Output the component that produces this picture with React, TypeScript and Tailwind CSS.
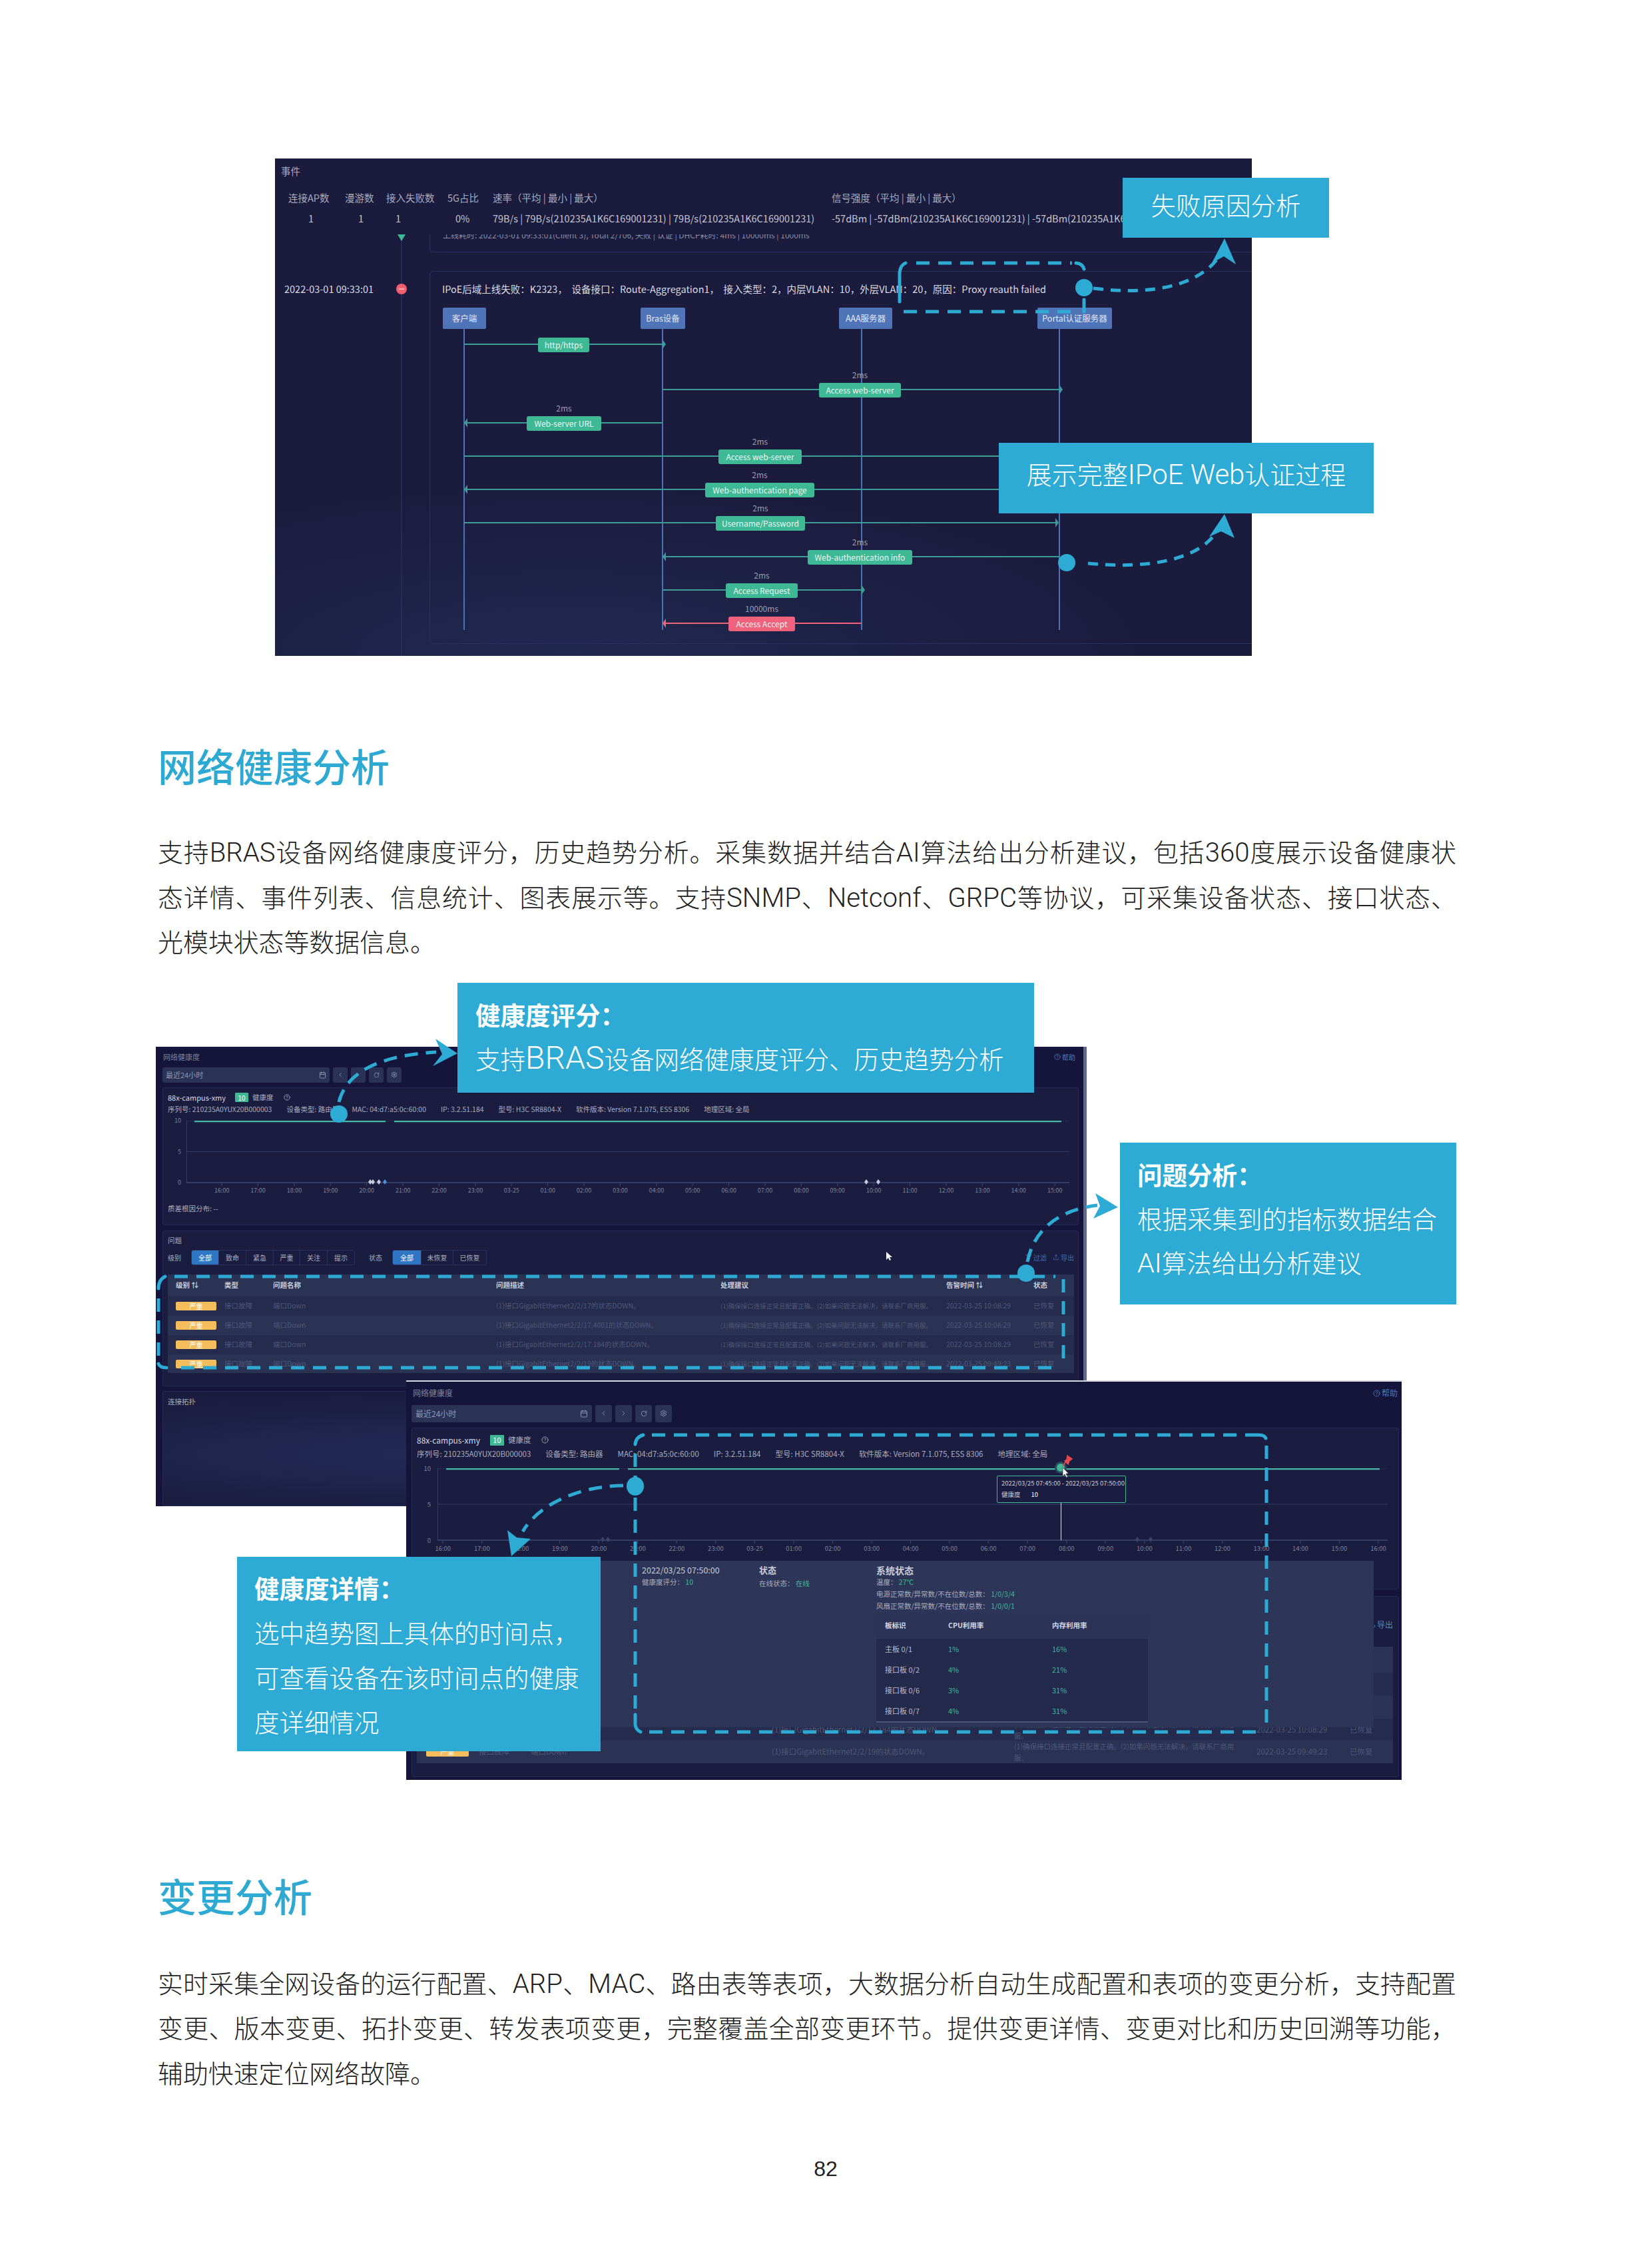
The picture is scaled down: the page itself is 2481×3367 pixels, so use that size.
import React from 'react';
import {
  Calendar,
  ChevronLeft,
  ChevronRight,
  CircleHelp,
  Filter,
  RotateCw,
  Settings,
  Upload,
} from 'lucide-react';

const BLUE = '#2dabd5';

const HOURS = [
  '16:00', '17:00', '18:00', '19:00', '20:00', '21:00', '22:00', '23:00', '03-25',
  '01:00', '02:00', '03:00', '04:00', '05:00', '06:00', '07:00', '08:00', '09:00',
  '10:00', '11:00', '12:00', '13:00', '14:00', '15:00', '16:00',
];

// sequence diagram, page coordinates
const SEQ_NODES = [
  { label: '客户端', x: 665, w: 65 },
  { label: 'Bras设备', x: 962, w: 67 },
  { label: 'AAA服务器', x: 1260, w: 80 },
  { label: 'Portal认证服务器', x: 1558, w: 112 },
];
const LIFELINES = [697, 995, 1294, 1591];
const SEQ_MESSAGES = [
  { label: 'http/https', x: 808, w: 77, y: 517, from: 697, to: 995, head: 'r', lat: '' },
  { label: 'Access web-server', x: 1230, w: 123, y: 585, from: 995, to: 1591, head: 'r', lat: '2ms' },
  { label: 'Web-server URL', x: 791, w: 112, y: 635, from: 697, to: 995, head: 'l', lat: '2ms' },
  { label: 'Access web-server', x: 1079, w: 125, y: 685, from: 697, to: 1591, head: '', lat: '2ms' },
  { label: 'Web-authentication page', x: 1059, w: 164, y: 735, from: 697, to: 1591, head: 'l', lat: '2ms' },
  { label: 'Username/Password', x: 1075, w: 134, y: 785, from: 697, to: 1585, head: 'r', lat: '2ms' },
  { label: 'Web-authentication info', x: 1213, w: 157, y: 836, from: 995, to: 1591, head: 'l', lat: '2ms' },
  { label: 'Access Request', x: 1090, w: 108, y: 886, from: 995, to: 1294, head: 'r', lat: '2ms' },
  { label: 'Access Accept', x: 1094, w: 100, y: 936, from: 995, to: 1294, head: 'l', lat: '10000ms', red: true },
];

const SMALL_ROWS = [
  { desc: '(1)接口GigabitEthernet2/2/17的状态DOWN。', time: '2022-03-25 10:08:29' },
  { desc: '(1)接口GigabitEthernet2/2/17.4001的状态DOWN。', time: '2022-03-25 10:08:29' },
  { desc: '(1)接口GigabitEthernet2/2/17.184的状态DOWN。', time: '2022-03-25 10:08:29' },
  { desc: '(1)接口GigabitEthernet2/2/19的状态DOWN。', time: '2022-03-25 09:49:23' },
];
const ADVICE = '(1)确保接口连接正常且配置正确。(2)如果问题无法解决，请联系厂商用服。';

const BOARDS = [
  { name: '主板 0/1', cpu: '1%', mem: '16%' },
  { name: '接口板 0/2', cpu: '4%', mem: '21%' },
  { name: '接口板 0/6', cpu: '3%', mem: '31%' },
  { name: '接口板 0/7', cpu: '4%', mem: '31%' },
];

// the print font has much wider latin than the CJK family, so those runs get their own face
const Mixed = ({ text, latin }: { text: string; latin: string }) => (
  <>
    {text.split(/([A-Za-z0-9 ]+)/).map((part, i) =>
      i % 2 === 1 ? (
        <span key={i} className={latin}>
          {part}
        </span>
      ) : (
        part
      ),
    )}
  </>
);

const CALLOUT_LATIN = "font-['Roboto'] font-light text-[1.28em]";
const TITLE_LATIN = "font-['Roboto'] font-light text-[1.1em]";
const BODY_LATIN = "font-['Roboto'] font-light text-[1.06em]";

const Callout = ({ className, children }: { className: string; children: React.ReactNode }) => (
  <div className={`absolute z-20 bg-[#2dabd5] text-white font-light ${className}`}>{children}</div>
);

const Paragraph = ({ lines }: { lines: string[] }) => (
  <div className="ml-[237px] w-[1950px] text-[37.9px] leading-[67.5px] font-light text-[#222]">
    {lines.map((line, i) => (
      <div key={i} className={`whitespace-nowrap h-[67.5px] ${i < lines.length - 1 ? '[text-align-last:justify]' : ''}`}>
        <Mixed text={line} latin={BODY_LATIN} />
      </div>
    ))}
  </div>
);

const Dash = ({ d }: { d: string }) => (
  <path d={d} fill="none" stroke={BLUE} strokeWidth="5" strokeDasharray="20 13" />
);
const Solid = ({ d }: { d: string }) => (
  <path d={d} fill="none" stroke={BLUE} strokeWidth="5" strokeLinecap="round" />
);

// 事件 screenshot with the sequence diagram
const EventFigure = () => {
  const ox = 413;
  const oy = 238;
  return (
    <div className="relative ml-[413px] w-[1467px] h-[747px] bg-[#1b1b3d] text-[14.5px] text-[#a8abbd] overflow-hidden">
      <div className="absolute inset-x-0 bottom-0 h-[300px] bg-[radial-gradient(ellipse_at_30%_100%,#212850_0%,#1b1b3d_60%)]" />
      <div className="relative pl-[9px] pt-[8px] leading-[22px]">事件</div>
      <div className="relative flex pl-[20px] mt-[18px] leading-[22px] whitespace-nowrap">
        <span className="w-[85px]">连接AP数</span>
        <span className="w-[62px]">漫游数</span>
        <span className="w-[92px]">接入失败数</span>
        <span className="w-[68px]">5G占比</span>
        <span className="w-[509px]">速率（平均 | 最小 | 最大）</span>
        <span>信号强度（平均 | 最小 | 最大）</span>
      </div>
      <div className="relative flex pl-[20px] mt-[9px] leading-[22px] whitespace-nowrap text-[#c4c6d4]">
        <span className="w-[85px] pl-[30px]">1</span>
        <span className="w-[62px] pl-[20px]">1</span>
        <span className="w-[92px] pl-[14px]">1</span>
        <span className="w-[68px] pl-[12px]">0%</span>
        <span className="w-[509px]">79B/s | 79B/s(210235A1K6C169001231) | 79B/s(210235A1K6C169001231)</span>
        <span>-57dBm | -57dBm(210235A1K6C169001231) | -57dBm(210235A1K6C169001231)</span>
      </div>
      <div className="absolute left-[232px] top-[0px] right-0 h-[141px] rounded-bl-[6px] border-l border-b border-[#2a3060] [clip-path:inset(114px_0_0_0)]">
        <div className="pl-[19px] pt-[106px] text-[12px] text-[#8a8ea6] whitespace-nowrap">
          上线耗时: 2022-03-01 09:33:01(Client 3), Total 2/706, 失败 | 认证 | DHCP耗时: 4ms | 10000ms | 1000ms
        </div>
      </div>
      <div className="absolute left-[232px] top-[169px] right-0 h-[560px] rounded-tl-[6px] rounded-bl-[6px] border-l border-t border-b border-[#2a3060]" />

      <div className="absolute left-[14px] top-[185px] leading-[22px] text-[#d8dae4] whitespace-nowrap">
        2022-03-01 09:33:01
      </div>
      <div className="absolute left-[251px] top-[185px] leading-[22px] text-[#d8dae4] whitespace-pre">
        IPoE后域上线失败：K2323，  设备接口：Route-Aggregation1，  接入类型：2，内层VLAN：10，外层VLAN：20，原因：Proxy reauth failed
      </div>

      {/* timeline and lifelines */}
      <svg className="absolute left-0 top-0" width="1467" height="747" viewBox={`${ox} ${oy} 1467 747`}>
        <line x1="603" y1="360" x2="603" y2="985" stroke="#2a2f5c" strokeWidth="1.5" />
        <path d="M597 352 H609 L603 362 Z" fill="#3fb896" />
        <ellipse cx="603" cy="434" rx="8" ry="8" fill="#f0606f" />
        <line x1="599" y1="434" x2="607" y2="434" stroke="#fff" strokeWidth="1" />
        {LIFELINES.map((x) => (
          <line key={x} x1={x} y1="494" x2={x} y2="946" stroke="#4a72b8" strokeWidth="2" />
        ))}
        {SEQ_MESSAGES.map((m, i) => {
          const color = m.red ? '#f0627c' : '#3c9d96';
          return (
            <g key={i}>
              <line x1={m.from} y1={m.y} x2={m.to} y2={m.y} stroke={color} strokeWidth="2" />
              {m.head === 'r' && <path d={`M${m.to} ${m.y - 7} L${m.to + 5} ${m.y} L${m.to} ${m.y + 7} Z`} fill={color} />}
              {m.head === 'l' && <path d={`M${m.from + 5} ${m.y - 7} L${m.from} ${m.y} L${m.from + 5} ${m.y + 7} Z`} fill={color} />}
            </g>
          );
        })}
      </svg>

      {SEQ_NODES.map((n) => (
        <div
          key={n.label}
          className="absolute h-[32px] rounded-[2px] bg-[#4f74b8] text-[12.5px] text-[#e4e9f4] flex items-center justify-center whitespace-nowrap"
          style={{ left: n.x - ox, top: 462 - oy, width: n.w }}
        >
          {n.label}
        </div>
      ))}
      {SEQ_MESSAGES.map((m, i) => (
        <div
          key={i}
          className="absolute flex flex-col items-center"
          style={{ left: m.x - ox, top: m.y - 35 - oy, width: m.w }}
        >
          <div className="h-[25px] leading-[25px] text-[12px] text-[#9a9db2]">{m.lat}</div>
          <div
            className={`w-full h-[22px] rounded-[3px] text-[12px] text-[#eaf6f2] flex items-center justify-center whitespace-nowrap ${
              m.red ? 'bg-[#f0627c]' : 'bg-[#3fb896]'
            }`}
          >
            {m.label}
          </div>
        </div>
      ))}
    </div>
  );
};

const FigureArrows = () => (
  <svg className="absolute left-0 top-0 z-10 pointer-events-none" width="2481" height="747" viewBox="0 238 2481 747">
    <Solid d="M1351 453 V410 Q1352 398 1360 395" />
    <Dash d="M1376 395 H1610" />
    <Solid d="M1616 395 Q1626 396 1628 404" />
    <Solid d="M1628 450 V468" />
    <Dash d="M1357 468 H1610" />
    <ellipse cx="1628" cy="432" rx="13" ry="13" fill={BLUE} />
    <path d="M1642 433 C1740 445 1806 425 1833 382" fill="none" stroke={BLUE} strokeWidth="5" strokeDasharray="15 11" />
    <path d="M1839 358 L1856 397 L1838 385 L1820 395 Z" fill={BLUE} />
    <ellipse cx="1602" cy="845" rx="13" ry="13" fill={BLUE} />
    <path d="M1634 846 C1720 855 1806 842 1830 793" fill="none" stroke={BLUE} strokeWidth="5" strokeDasharray="15 11" />
    <path d="M1839 772 L1854 808 L1834 798 L1816 806 Z" fill={BLUE} />
  </svg>
);

type ChartProps = {
  width: number;
  height: number;
  step: number;
  firstTick: number;
  ticks: number;
  lineStart: number;
  lineEnd: number;
  gap: number;
  dots: { x: number; color: string }[];
};

const TrendChart = ({ width, height, step, firstTick, ticks, lineStart, lineEnd, gap, dots }: ChartProps) => (
  <svg className="block" width={width} height={height + 6}>
    <line x1="0" y1="0" x2={width} y2="0" stroke="#333c66" strokeWidth="1" />
    <line x1="0" y1={height / 2} x2={width} y2={height / 2} stroke="#333c66" strokeWidth="1" />
    <line x1="0.5" y1="0" x2="0.5" y2={height} stroke="#333c66" strokeWidth="1" />
    <line x1="0" y1={height} x2={width} y2={height} stroke="#3d4873" strokeWidth="1.5" />
    {Array.from({ length: ticks }, (_, i) => (
      <line key={i} x1={firstTick + i * step} y1={height} x2={firstTick + i * step} y2={height + 5} stroke="#3d4873" strokeWidth="1" />
    ))}
    <line x1={lineStart} y1="1" x2={gap} y2="1" stroke="#45b5a5" strokeWidth="2.5" />
    <line x1={gap + 13} y1="1" x2={lineEnd} y2="1" stroke="#45b5a5" strokeWidth="2.5" />
    {dots.map((d) => (
      <path key={d.x} d={`M${d.x} ${height - 5} l3 4 l-3 4 l-3 -4 Z`} fill={d.color} />
    ))}
  </svg>
);

const ToolButton = ({ className, children }: { className: string; children: React.ReactNode }) => (
  <div className={`flex items-center justify-center rounded-[3px] bg-[#2a3355] text-[#8f97b3] ${className}`}>{children}</div>
);

const Segment = ({ items, widths, active }: { items: string[]; widths: string[]; active: number }) => (
  <div className="flex h-[23px] rounded-[3px] border border-[#2b3360] overflow-hidden">
    {items.map((item, i) => (
      <div
        key={item}
        className={`flex items-center justify-center text-[10px] ${widths[i]} ${i > 0 ? 'border-l border-[#2b3360]' : ''} ${
          i === active ? 'bg-[#2f77c4] text-white' : 'text-[#a8abbd]'
        }`}
      >
        {item}
      </div>
    ))}
  </div>
);

const WARN = 'bg-[#f5bd5b] text-white flex items-center justify-center rounded-[2px]';

// 网络健康度 screenshot, back layer
const BackDashboard = () => (
  <div className="absolute z-0 left-[234px] top-[96px] w-[1398px] h-[690px] bg-[#15143a] border-r-[5px] border-[#5c6a88] overflow-hidden flex flex-col pl-[10px] pr-[7px] text-[10.5px] text-[#a8abbd]">
    <div className="h-[31px] flex items-center justify-between pl-[1px] pr-[5px]">
      <span className="text-[#7d8199] text-[11px]">网络健康度</span>
      <span className="flex items-center gap-[2px] text-[#4f78b8] text-[10px]">
        <CircleHelp size={10} />
        帮助
      </span>
    </div>
    <div className="flex h-[23px] gap-[5px] shrink-0">
      <div className="w-[251px] rounded-[3px] bg-[#2a3355] flex items-center justify-between px-[5px] text-[#8f97b3] text-[11px]">
        最近24小时
        <Calendar size={11} />
      </div>
      <ToolButton className="w-[22px]"><ChevronLeft size={10} /></ToolButton>
      <ToolButton className="w-[22px]"><ChevronRight size={10} /></ToolButton>
      <ToolButton className="w-[22px]"><RotateCw size={9} /></ToolButton>
      <ToolButton className="w-[22px]"><Settings size={10} /></ToolButton>
    </div>

    <div className="mt-[7px] h-[207px] shrink-0 rounded-[3px] border border-[#262b55] bg-[#1b1d40] pl-[7px] pt-[7px]">
      <div className="flex items-center h-[15px] whitespace-nowrap">
        <span className="text-[11px] text-[#d5d8e4]">88x-campus-xmy</span>
        <span className="ml-[14px] w-[20px] h-[14px] rounded-[1px] bg-[#3fb896] text-[10px] text-white flex items-center justify-center">10</span>
        <span className="ml-[6px] text-[#a8abbd]">健康度</span>
        <CircleHelp className="ml-[15px]" size={10} />
      </div>
      <div className="flex mt-[3px] h-[14px] gap-[22px] items-center whitespace-nowrap text-[10.5px]">
        <span>序列号: 210235A0YUX20B000003</span>
        <span className="w-[76px]">设备类型: 路由器</span>
        <span>MAC: 04:d7:a5:0c:60:00</span>
        <span>IP: 3.2.51.184</span>
        <span>型号: H3C SR8804-X</span>
        <span>软件版本: Version 7.1.075, ESS 8306</span>
        <span>地理区域: 全局</span>
      </div>
      <div className="flex mt-[10px]">
        <div className="w-[28px] h-[106px] -my-[6.5px] flex flex-col justify-between items-end pr-[8px] text-[9px] leading-[13px] text-[#7d8199]">
          <span>10</span>
          <span>5</span>
          <span>0</span>
        </div>
        <TrendChart
          width={1326}
          height={93}
          step={54.4}
          firstTick={53}
          ticks={24}
          lineStart={12}
          lineEnd={1314}
          gap={299}
          dots={[
            { x: 276, color: '#c8cbd8' },
            { x: 280, color: '#c8cbd8' },
            { x: 289, color: '#c8cbd8' },
            { x: 298, color: '#4a90d8' },
            { x: 1021, color: '#c8cbd8' },
            { x: 1039, color: '#c8cbd8' },
          ]}
        />
      </div>
      <div className="ml-[28px] pl-[26px] grid grid-cols-[repeat(24,54.4px)] text-center text-[9px] text-[#7d8199] leading-[12px]">
        {HOURS.slice(0, 24).map((h, i) => (
          <span key={i}>{h}</span>
        ))}
      </div>
      <div className="mt-[14px] leading-[14px]">质差根因分布: --</div>
    </div>

    <div className="mt-[8px] h-[234px] shrink-0 rounded-[3px] border border-[#262b55] bg-[#1b1d40] pl-[7px] pt-[7px] relative">
      <div className="leading-[14px]">问题</div>
      <div className="flex items-center mt-[7px] h-[23px] whitespace-nowrap">
        <span className="w-[35px] text-[10px]">级别</span>
        <Segment
          items={['全部', '致命', '紧急', '严重', '关注', '提示']}
          widths={['w-[40px]', 'w-[41px]', 'w-[41px]', 'w-[40px]', 'w-[41px]', 'w-[41px]']}
          active={0}
        />
        <span className="ml-[21px] w-[35px] text-[10px]">状态</span>
        <Segment items={['全部', '未恢复', '已恢复']} widths={['w-[42px]', 'w-[48px]', 'w-[50px]']} active={0} />
        <span className="ml-auto mr-[6px] flex items-center gap-[9px] text-[10px] text-[#3a6fb0]">
          <span className="flex items-center gap-[2px]"><Filter size={10} />过滤</span>
          <span className="flex items-center gap-[2px]"><Upload size={10} />导出</span>
        </span>
      </div>
      <div className="mt-[14px] w-[1361px] h-[148px] overflow-hidden">
        <div className="h-[33px] bg-[#2a3354] grid grid-cols-[73px_73px_335px_337px_339px_131px_1fr] pl-[12px] items-center font-bold text-[#c9ccd8]">
          <span>级别 ⇅</span>
          <span>类型</span>
          <span>问题名称</span>
          <span>问题描述</span>
          <span>处理建议</span>
          <span>告警时间 ⇅</span>
          <span>状态</span>
        </div>
        {SMALL_ROWS.map((row, i) => (
          <div
            key={i}
            className={`h-[29px] grid grid-cols-[73px_73px_335px_337px_339px_131px_1fr] pl-[12px] items-center text-[#4f5878] ${
              i % 2 === 0 ? 'bg-[#242b4d]' : 'bg-[#2a3354]'
            }`}
          >
            <span className={`w-[61px] h-[13px] text-[10px] ${WARN}`}>严重</span>
            <span>接口故障</span>
            <span>端口Down</span>
            <span>{row.desc}</span>
            <span className="w-[323px] leading-[14px] text-[9.5px]">{ADVICE}</span>
            <span>{row.time}</span>
            <span>已恢复</span>
          </div>
        ))}
      </div>
      <svg className="absolute left-[1085px] top-[30px]" width="10" height="15" viewBox="0 0 10 15">
        <path d="M1 1 L1 13 L4 10 L6 14 L8 13 L6 9 L10 9 Z" fill="#f4f4f8" />
      </svg>
    </div>

    <div className="mt-[7px] h-[173px] shrink-0 rounded-[3px] border border-[#262b55] bg-[radial-gradient(ellipse_at_35%_55%,#232c58_0%,#1b1d40_65%)] pl-[7px] pt-[8px]">
      <div className="leading-[14px]">连接拓扑</div>
    </div>
  </div>
);

// 网络健康度 screenshot, front layer with the detail popup
const FrontDashboard = () => (
  <div className="absolute z-[1] left-[610px] top-[597px] w-[1495px] h-[600px] bg-[#15143a] border-t-2 border-[#d5d6de] overflow-hidden flex flex-col pl-[8px] pr-[4px] text-[11.5px] text-[#a8abbd]">
    <div className="h-[35px] shrink-0 flex items-center justify-between pl-[2px] pr-[2px]">
      <span className="text-[#7d8199] text-[12px]">网络健康度</span>
      <span className="flex items-center gap-[2px] text-[#4f78b8] text-[12px]">
        <CircleHelp size={11} />
        帮助
      </span>
    </div>
    <div className="flex h-[26px] gap-[5px] shrink-0">
      <div className="w-[271px] rounded-[3px] bg-[#2a3355] flex items-center justify-between px-[6px] text-[#8f97b3] text-[12px]">
        最近24小时
        <Calendar size={12} />
      </div>
      <ToolButton className="w-[25px]"><ChevronLeft size={11} /></ToolButton>
      <ToolButton className="w-[25px]"><ChevronRight size={11} /></ToolButton>
      <ToolButton className="w-[25px]"><RotateCw size={10} /></ToolButton>
      <ToolButton className="w-[25px]"><Settings size={11} /></ToolButton>
    </div>

    <div className="mt-[8px] h-[243px] shrink-0 rounded-[3px] border border-[#262b55] bg-[#1b1d40] pl-[7px] pt-[9px] relative">
      <div className="flex items-center h-[18px] whitespace-nowrap">
        <span className="text-[12px] text-[#d5d8e4]">88x-campus-xmy</span>
        <span className="ml-[15px] w-[21px] h-[16px] rounded-[1px] bg-[#3fb896] text-[11px] text-white flex items-center justify-center">10</span>
        <span className="ml-[6px]">健康度</span>
        <CircleHelp className="ml-[16px]" size={11} />
      </div>
      <div className="flex mt-[3px] h-[18px] gap-[22px] items-center whitespace-nowrap">
        <span>序列号: 210235A0YUX20B000003</span>
        <span>设备类型: 路由器</span>
        <span>MAC: 04:d7:a5:0c:60:00</span>
        <span>IP: 3.2.51.184</span>
        <span>型号: H3C SR8804-X</span>
        <span>软件版本: Version 7.1.075, ESS 8306</span>
        <span>地理区域: 全局</span>
      </div>
      <div className="flex mt-[12px]">
        <div className="w-[31px] h-[122px] -my-[7px] flex flex-col justify-between items-end pr-[10px] text-[9.5px] leading-[14px] text-[#7d8199]">
          <span>10</span>
          <span>5</span>
          <span>0</span>
        </div>
        <TrendChart
          width={1427}
          height={108}
          step={58.54}
          firstTick={8}
          ticks={25}
          lineStart={13}
          lineEnd={1415}
          gap={273}
          dots={[
            { x: 248, color: '#3c4468' },
            { x: 256, color: '#3c4468' },
            { x: 1051, color: '#3c4468' },
            { x: 1071, color: '#3c4468' },
          ]}
        />
      </div>
      <div className="ml-[31px] -translate-x-[21px] grid grid-cols-[repeat(25,58.54px)] text-center text-[9.5px] text-[#7d8199] leading-[12px] whitespace-nowrap">
        {HOURS.map((h, i) => (
          <span key={i}>{h}</span>
        ))}
      </div>
      {/* tooltip on the hovered point */}
      <div className="absolute left-[878px] top-[71px] w-[194px] h-[41px] rounded-[2px] border border-[#3fb89a] bg-[#1b1d40] px-[6px] py-[2px] text-[9.5px] leading-[17px] text-[#c9ccd8] whitespace-nowrap z-[1]">
        <div>2022/03/25 07:45:00 - 2022/03/25 07:50:00</div>
        <div className="flex gap-[16px]"><span>健康度</span><span className="text-white">10</span></div>
      </div>
      <div className="absolute left-[974px] top-[112px] w-[1px] h-[56px] bg-[#e4e6ee]" />
      <div className="absolute left-[968px] top-[53px] w-[12px] h-[12px] rounded-full bg-[#3fb896] ring-[3px] ring-[#2d4a5c]" />
      <svg className="absolute left-[975px] top-[40px]" width="18" height="20" viewBox="0 0 18 20">
        <path d="M9 1 L16 6 L12 9 L10 14 L5 9 L8 7 Z M6 11 L2 17" fill="#e8474f" stroke="#e8474f" strokeWidth="1.5" />
      </svg>
      <svg className="absolute left-[976px] top-[58px] z-[2]" width="12" height="18" viewBox="0 0 12 18">
        <path d="M1 1 L1 14 L4 11 L6.5 16 L8.5 15 L6 10 L10 10 Z" fill="#f4f4f8" stroke="#222" strokeWidth="0.6" />
      </svg>
    </div>

    <div className="mt-[10px] h-[272px] shrink-0 rounded-[3px] border border-[#262b55] bg-[#1b1d40] pl-[7px] pt-[27px]">
      <div className="flex justify-end pr-[8px] h-[30px] items-center text-[12px] text-[#4f86c8]">
        <span className="flex items-center gap-[2px]"><Upload size={11} />导出</span>
      </div>
      <div className="mt-[18px] w-[1466px]">
        <div className="h-[39px] bg-[#2a3354]" />
        <div className="h-[34px] bg-[#242b4d]" />
        <div className="h-[35px] bg-[#2a3354]" />
        {SMALL_ROWS.slice(2).map((row, i) => (
          <div
            key={i}
            className={`h-[33.5px] grid grid-cols-[79px_78px_362px_364px_364px_140px_1fr] pl-[14px] items-center text-[#4f5878] ${
              i % 2 === 0 ? 'bg-[#242b4d]' : 'bg-[#2a3354]'
            }`}
          >
            <span className={`w-[64px] h-[14px] text-[10.5px] ${WARN}`}>严重</span>
            <span>接口故障</span>
            <span>端口Down</span>
            <span>{row.desc}</span>
            <span className="w-[345px] leading-[17px] text-[10.5px]">{ADVICE}</span>
            <span>{row.time}</span>
            <span>已恢复</span>
          </div>
        ))}
      </div>
    </div>

    {/* detail popup over the chart */}
    <div className="absolute left-[16px] top-[269px] w-[1437px] h-[250px] bg-[#2d3658] z-[2] pl-[338px] pt-[5px] flex gap-[68px] leading-[18px] text-[#a8abbd]">
      <div className="w-[108px] whitespace-nowrap">
        <div className="text-[12.5px] text-[#c9ccd8]">2022/03/25 07:50:00</div>
        <div className="text-[10.5px]">健康度评分： <span className="text-[#3fb896]">10</span></div>
      </div>
      <div className="w-[108px] whitespace-nowrap">
        <div className="text-[13px] font-bold text-[#c9ccd8]">状态</div>
        <div className="text-[10.5px] mt-[2px]">在线状态： <span className="text-[#3fb896]">在线</span></div>
      </div>
      <div className="whitespace-nowrap">
        <div className="text-[14px] font-bold text-[#c9ccd8]">系统状态</div>
        <div className="text-[10.5px]">温度： <span className="text-[#3fb896]">27℃</span></div>
        <div className="text-[10.5px]">电源正常数/异常数/不在位数/总数： <span className="text-[#3fb896]">1/0/3/4</span></div>
        <div className="text-[10.5px]">风扇正常数/异常数/不在位数/总数： <span className="text-[#3fb896]">1/0/0/1</span></div>
        <div className="w-[408px] mt-[1px] border-b-2 border-[#4a5578]">
          <div className="h-[39px] grid grid-cols-[95px_156px_1fr] pl-[13px] items-center font-bold text-[10.5px] text-[#d5d8e4] bg-[#2b3456]">
            <span>板标识</span>
            <span>CPU利用率</span>
            <span>内存利用率</span>
          </div>
          {BOARDS.map((b) => (
            <div key={b.name} className="h-[31px] grid grid-cols-[95px_156px_1fr] pl-[13px] items-center bg-[#232a4c] text-[11px] text-[#b8bccb]">
              <span>{b.name}</span>
              <span className="text-[#3fb896]">{b.cpu}</span>
              <span className="text-[#3fb896]">{b.mem}</span>
            </div>
          ))}
        </div>
      </div>
    </div>
  </div>
);

const CollageArrows = () => (
  <svg className="absolute left-0 top-0 z-10 pointer-events-none" width="2481" height="1197" viewBox="0 1476 2481 1197">
    {/* 健康度评分 */}
    <ellipse cx="509" cy="1673" rx="13" ry="13" fill={BLUE} />
    <path d="M509 1655 C520 1610 570 1585 655 1580" fill="none" stroke={BLUE} strokeWidth="5" strokeDasharray="20 12" />
    <path d="M687 1582 L654 1560 L664 1583 L650 1601 Z" fill={BLUE} />
    {/* 问题分析 table frame */}
    <Solid d="M238 1935 Q238 1922 248 1917" />
    <Dash d="M262 1917 H1585" />
    <Dash d="M238 1950 V2037" />
    <Solid d="M238 2048 Q240 2054 250 2054" />
    <Dash d="M272 2054 H1590" />
    <Dash d="M1597 1921 V2052" />
    <ellipse cx="1541" cy="1912" rx="13" ry="13" fill={BLUE} />
    <path d="M1543 1895 C1552 1850 1585 1818 1648 1810" fill="none" stroke={BLUE} strokeWidth="5" strokeDasharray="20 12" />
    <path d="M1679 1813 L1645 1792 L1652 1811 L1642 1830 Z" fill={BLUE} />
    {/* 健康度详情 frame */}
    <Solid d="M954 2169 Q955 2158 966 2155" />
    <Dash d="M979 2155 H1895" />
    <Solid d="M1891 2155 Q1899 2155 1901 2160" />
    <Dash d="M954 2183 V2575" />
    <Solid d="M954 2575 V2590 Q955 2598 962 2601" />
    <Dash d="M975 2601 H1895" />
    <Dash d="M1902 2171 V2592" />
    <ellipse cx="954" cy="2232" rx="13" ry="14" fill={BLUE} />
    <path d="M936 2231 C860 2232 805 2265 785 2300" fill="none" stroke={BLUE} strokeWidth="5" strokeDasharray="20 12" />
    <path d="M768 2337 L762 2298 L776 2309 L797 2311 Z" fill={BLUE} />
  </svg>
);

export default function App() {
  return (
    <div className="w-[2481px] h-[3367px] bg-white pt-[238px] font-['Noto_Sans_CJK_SC','Noto_Sans',sans-serif] overflow-hidden">
      <div className="relative">
        <EventFigure />
        <FigureArrows />
        <Callout className="left-[1686px] top-[29px] w-[310px] h-[90px] pb-[10px] flex items-center justify-center text-[37.5px]">
          失败原因分析
        </Callout>
        <Callout className="left-[1500px] top-[427px] w-[563px] h-[106px] pb-[10px] flex items-center justify-center text-[38px] whitespace-pre">
          <span><Mixed text="展示完整IPoE Web认证过程" latin={TITLE_LATIN} /></span>
        </Callout>
      </div>

      <h2 className="ml-[237px] mt-[124px] text-[58px] leading-[80px] font-medium text-[#2eaad2]">网络健康分析</h2>
      <div className="mt-[55px]">
        <Paragraph
          lines={[
            '支持BRAS设备网络健康度评分，历史趋势分析。采集数据并结合AI算法给出分析建议，包括360度展示设备健康状',
            '态详情、事件列表、信息统计、图表展示等。支持SNMP、Netconf、GRPC等协议，可采集设备状态、接口状态、',
            '光模块状态等数据信息。',
          ]}
        />
      </div>

      <div className="relative mt-[29px] h-[1197px]">
        <BackDashboard />
        <FrontDashboard />
        <CollageArrows />
        <Callout className="left-[687px] top-0 w-[866px] h-[165px] pl-[27px] pt-[14px] text-[37.5px] leading-[66px]">
          <div className="font-bold">健康度评分：</div>
          <div><Mixed text="支持BRAS设备网络健康度评分、历史趋势分析" latin={CALLOUT_LATIN} /></div>
        </Callout>
        <Callout className="left-[1682px] top-[240px] w-[505px] h-[243px] pl-[26px] pt-[14px] text-[37.5px] leading-[66px]">
          <div className="font-bold">问题分析：</div>
          <div>根据采集到的指标数据结合</div>
          <div><Mixed text="AI算法给出分析建议" latin={TITLE_LATIN} /></div>
        </Callout>
        <Callout className="left-[356px] top-[862px] w-[546px] h-[292px] pl-[26px] pt-[12px] text-[37.5px] leading-[67px]">
          <div className="font-bold">健康度详情：</div>
          <div>选中趋势图上具体的时间点，</div>
          <div>可查看设备在该时间点的健康</div>
          <div>度详细情况</div>
        </Callout>
      </div>

      <h2 className="ml-[237px] mt-[133px] text-[58px] leading-[80px] font-medium text-[#2eaad2]">变更分析</h2>
      <div className="mt-[57px]">
        <Paragraph
          lines={[
            '实时采集全网设备的运行配置、ARP、MAC、路由表等表项，大数据分析自动生成配置和表项的变更分析，支持配置',
            '变更、版本变更、拓扑变更、转发表项变更，完整覆盖全部变更环节。提供变更详情、变更对比和历史回溯等功能，',
            '辅助快速定位网络故障。',
          ]}
        />
      </div>
      <div className="mt-[92px] text-center ml-[-1px] text-[32px] leading-[40px] font-['Liberation_Sans',sans-serif] text-[#222]">82</div>
    </div>
  );
}
